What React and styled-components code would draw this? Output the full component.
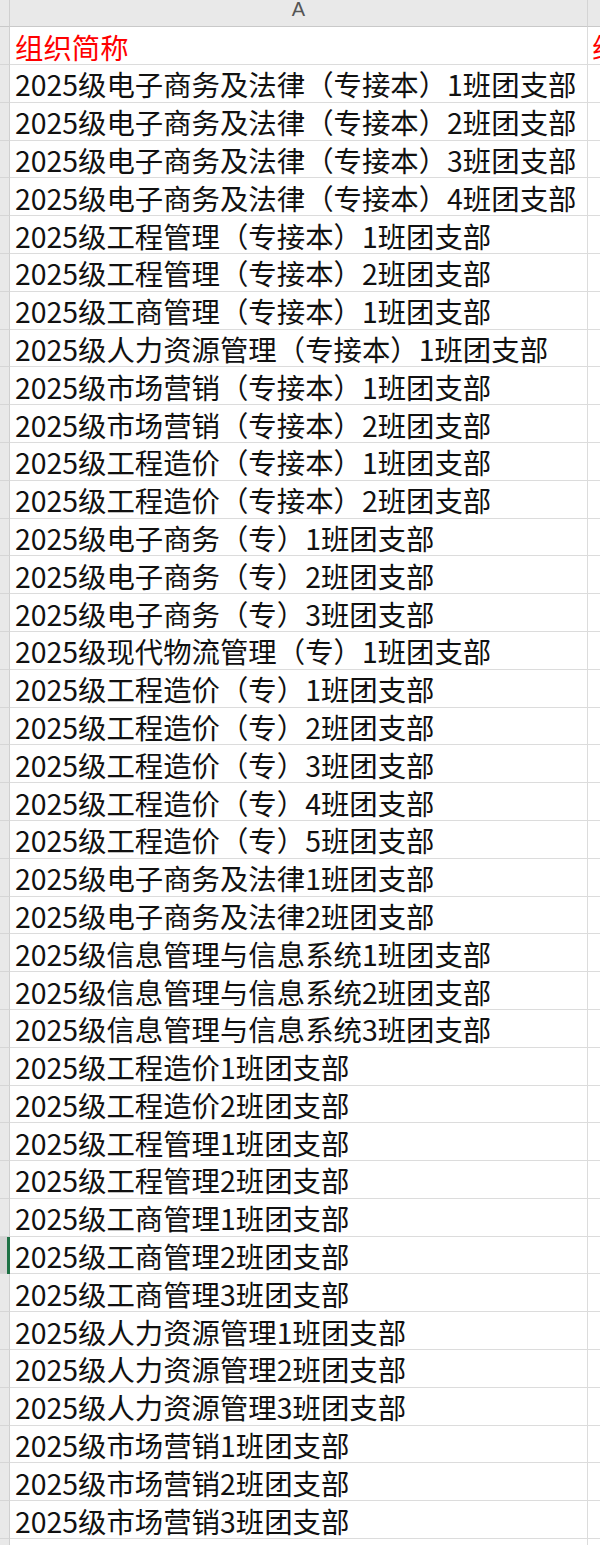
import React from "react";
import styled, { createGlobalStyle } from "styled-components";

const rows = [
  "2025级电子商务及法律（专接本）1班团支部",
  "2025级电子商务及法律（专接本）2班团支部",
  "2025级电子商务及法律（专接本）3班团支部",
  "2025级电子商务及法律（专接本）4班团支部",
  "2025级工程管理（专接本）1班团支部",
  "2025级工程管理（专接本）2班团支部",
  "2025级工商管理（专接本）1班团支部",
  "2025级人力资源管理（专接本）1班团支部",
  "2025级市场营销（专接本）1班团支部",
  "2025级市场营销（专接本）2班团支部",
  "2025级工程造价（专接本）1班团支部",
  "2025级工程造价（专接本）2班团支部",
  "2025级电子商务（专）1班团支部",
  "2025级电子商务（专）2班团支部",
  "2025级电子商务（专）3班团支部",
  "2025级现代物流管理（专）1班团支部",
  "2025级工程造价（专）1班团支部",
  "2025级工程造价（专）2班团支部",
  "2025级工程造价（专）3班团支部",
  "2025级工程造价（专）4班团支部",
  "2025级工程造价（专）5班团支部",
  "2025级电子商务及法律1班团支部",
  "2025级电子商务及法律2班团支部",
  "2025级信息管理与信息系统1班团支部",
  "2025级信息管理与信息系统2班团支部",
  "2025级信息管理与信息系统3班团支部",
  "2025级工程造价1班团支部",
  "2025级工程造价2班团支部",
  "2025级工程管理1班团支部",
  "2025级工程管理2班团支部",
  "2025级工商管理1班团支部",
  "2025级工商管理2班团支部",
  "2025级工商管理3班团支部",
  "2025级人力资源管理1班团支部",
  "2025级人力资源管理2班团支部",
  "2025级人力资源管理3班团支部",
  "2025级市场营销1班团支部",
  "2025级市场营销2班团支部",
  "2025级市场营销3班团支部",
];

const ACTIVE = 31;

const GlobalStyle = createGlobalStyle`
  html, body {
    margin: 0;
    padding: 0;
    background: #ffffff;
    overflow: hidden;
  }
`;

const Sheet = styled.div`
  width: 600px;
  height: 1545px;
  overflow: hidden;
  background: #ffffff;
`;

const Line = styled.div`
  display: grid;
  grid-template-columns: 10px 578px 200px;
  height: ${(p) => p.$h}px;
  box-sizing: border-box;
`;

const Corner = styled.div`
  background: #e9e9e9;
  border-right: 1px solid #d0d0d0;
  border-bottom: 1px solid #c9c9c9;
`;

const ColHead = styled.div`
  background: #e9e9e9;
  border-right: 1px solid #d4d4d4;
  border-bottom: 1px solid #c9c9c9;
  display: flex;
  justify-content: center;
  align-items: flex-start;
  font-family: "Liberation Sans", Arial, sans-serif;
  font-size: 20px;
  line-height: 20px;
  color: #555555;
  overflow: hidden;
`;

const HeadLabel = styled.span`
  margin-top: -1px;
`;

const RowHead = styled.div`
  position: relative;
  background: ${(p) => (p.$active ? "#d3d3d3" : "#e9e9e9")};
  border-right: 1px solid #d0d0d0;
  border-bottom: 1px solid #d6d6d6;
  box-sizing: border-box;
  &::after {
    content: "";
    display: ${(p) => (p.$active ? "block" : "none")};
    position: absolute;
    right: -1px;
    top: 0;
    bottom: -1px;
    width: 3px;
    background: #1e7145;
  }
`;

const Cell = styled.div`
  display: flex;
  align-items: flex-end;
  padding: 0 0 3px 5px;
  box-sizing: border-box;
  border-right: 1px solid #dcdcdc;
  border-bottom: 1px solid #dcdcdc;
  font-family: "Noto Sans CJK SC", "Noto Sans", sans-serif;
  font-size: 28.4px;
  line-height: 1;
  color: ${(p) => (p.$red ? "#ff0000" : "#111111")};
  white-space: nowrap;
  overflow: visible;
`;

const EdgeCell = styled(Cell)`
  padding-left: 4px;
  overflow: hidden;
`;

export default function App() {
  return (
    <>
      <GlobalStyle />
      <Sheet>
        <Line $h={27.2}>
          <Corner />
          <ColHead>
            <HeadLabel>A</HeadLabel>
          </ColHead>
          <ColHead />
        </Line>
        <Line $h={37.8}>
          <RowHead />
          <Cell $red>组织简称</Cell>
          <EdgeCell $red>组织类型</EdgeCell>
        </Line>
        {rows.map((text, i) => (
          <Line key={i} $h={37.8}>
            <RowHead $active={i === ACTIVE} />
            <Cell>{text}</Cell>
            <EdgeCell />
          </Line>
        ))}
        <Line $h={37.8}>
          <RowHead />
          <Cell />
          <EdgeCell />
        </Line>
      </Sheet>
    </>
  );
}
